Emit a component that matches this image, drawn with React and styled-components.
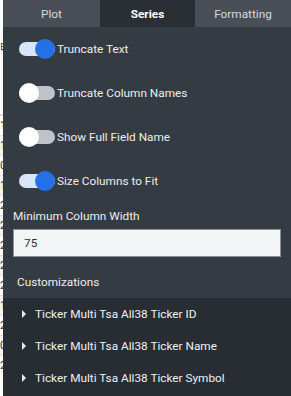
import React from "react";
import styled, { createGlobalStyle } from "styled-components";

const Global = createGlobalStyle`
  html, body { margin: 0; padding: 0; background: #ffffff; }
  body { font-family: Roboto, "Liberation Sans", sans-serif; overflow: hidden; }
  * { box-sizing: border-box; }
`;

const Page = styled.div`
  position: relative;
  width: 291px;
  height: 396px;
  overflow: hidden;
  background: #ffffff;
`;

const BgTable = styled.div`
  display: flex;
  flex-direction: column;
`;

const BgRow = styled.div`
  height: 20px;
  line-height: 20px;
  font-size: 11px;
  color: #333;
  background: ${(p) => (p.$alt ? "#f2f3f4" : "#ffffff")};
  border-top: 1px solid #dfe1e3;
`;

const Header = styled.div`
  height: 115px;
  border-bottom: 1px solid #d0d3d6;
  font-size: 11px;
  padding-top: 40px;
  color: #333;
`;

const Panel = styled.div`
  position: absolute;
  top: 0;
  left: 3px;
  width: 288px;
  height: 396px;
  background: #353b42;
  display: flex;
  flex-direction: column;
  color: #e8eaed;
`;

const TabBar = styled.div`
  display: grid;
  grid-template-columns: 97px 95px 96px;
  height: 27px;
`;

const Tab = styled.div`
  display: flex;
  align-items: center;
  justify-content: center;
  font-size: 11.8px;
  background: ${(p) => (p.$active ? "#2a2f36" : "#4a4f57")};
  color: ${(p) => (p.$active ? "#ffffff" : "#d6d9dd")};
  font-weight: ${(p) => (p.$active ? 700 : 400)};
`;

const ToggleRow = styled.div`
  height: 44px;
  display: flex;
  align-items: center;
  padding-left: 16px;
  font-size: 11.8px;
  color: #eceef0;
`;

const Switch = styled.div`
  position: relative;
  width: 38px;
  height: 20px;
  flex: none;
`;

const Track = styled.div`
  position: absolute;
  left: 0;
  top: 3px;
  width: 36px;
  height: 14px;
  border-radius: 7px;
  background: ${(p) => (p.$on ? "#d8e4f8" : "#bfc3c9")};
`;

const Knob = styled.div`
  position: absolute;
  top: 0;
  left: ${(p) => (p.$on ? "16px" : "0")};
  width: 20px;
  height: 20px;
  border-radius: 50%;
  background: ${(p) => (p.$on ? "#2570e6" : "#ffffff")};
`;

const FieldLabel = styled.div`
  margin: 5px 10px 5px;
  line-height: 16px;
  font-size: 11.8px;
  color: #eceef0;
`;

const Input = styled.div`
  margin: 0 10px;
  height: 28px;
  background: #f3f5f7;
  border: 1px solid #8d9298;
  display: flex;
  align-items: center;
  padding-left: 10px;
  font-size: 11.8px;
  color: #2d3136;
`;

const SectionTitle = styled.div`
  margin: 17px 14px 8px;
  line-height: 16px;
  font-size: 11.8px;
  color: #eceef0;
`;

const List = styled.div`
  flex: 1;
  background: #282d34;
  display: flex;
  flex-direction: column;
`;

const Item = styled.div`
  height: 32px;
  display: flex;
  align-items: center;
  padding-left: 19px;
  gap: 9px;
  font-size: 11.8px;
  color: #eef0f2;
`;

const Caret = styled.span`
  width: 0;
  height: 0;
  border-top: 4px solid transparent;
  border-bottom: 4px solid transparent;
  border-left: 4px solid #e8eaed;
`;

const toggles = [
  { label: "Truncate Text", on: true },
  { label: "Truncate Column Names", on: false },
  { label: "Show Full Field Name", on: false },
  { label: "Size Columns to Fit", on: true },
];

const items = [
  "Ticker Multi Tsa All38 Ticker ID",
  "Ticker Multi Tsa All38 Ticker Name",
  "Ticker Multi Tsa All38 Ticker Symbol",
];

const bgNums = ["1", "1", "0", "1", "2", "2", "2", "2", "2", "1", "2", "0", "2"];

export default function App() {
  return (
    <>
      <Global />
      <Page>
        <Header>⊞</Header>
        <BgTable>
          {bgNums.map((n, i) => (
            <BgRow key={i} $alt={i % 2 === 1}>
              {n}
            </BgRow>
          ))}
        </BgTable>
        <Panel>
          <TabBar>
            <Tab>Plot</Tab>
            <Tab $active>Series</Tab>
            <Tab>Formatting</Tab>
          </TabBar>
          {toggles.map((t) => (
            <ToggleRow key={t.label}>
              <Switch>
                <Track $on={t.on} />
                <Knob $on={t.on} />
              </Switch>
              {t.label}
            </ToggleRow>
          ))}
          <FieldLabel>Minimum Column Width</FieldLabel>
          <Input>75</Input>
          <SectionTitle>Customizations</SectionTitle>
          <List>
            {items.map((it) => (
              <Item key={it}>
                <Caret />
                {it}
              </Item>
            ))}
          </List>
        </Panel>
      </Page>
    </>
  );
}
